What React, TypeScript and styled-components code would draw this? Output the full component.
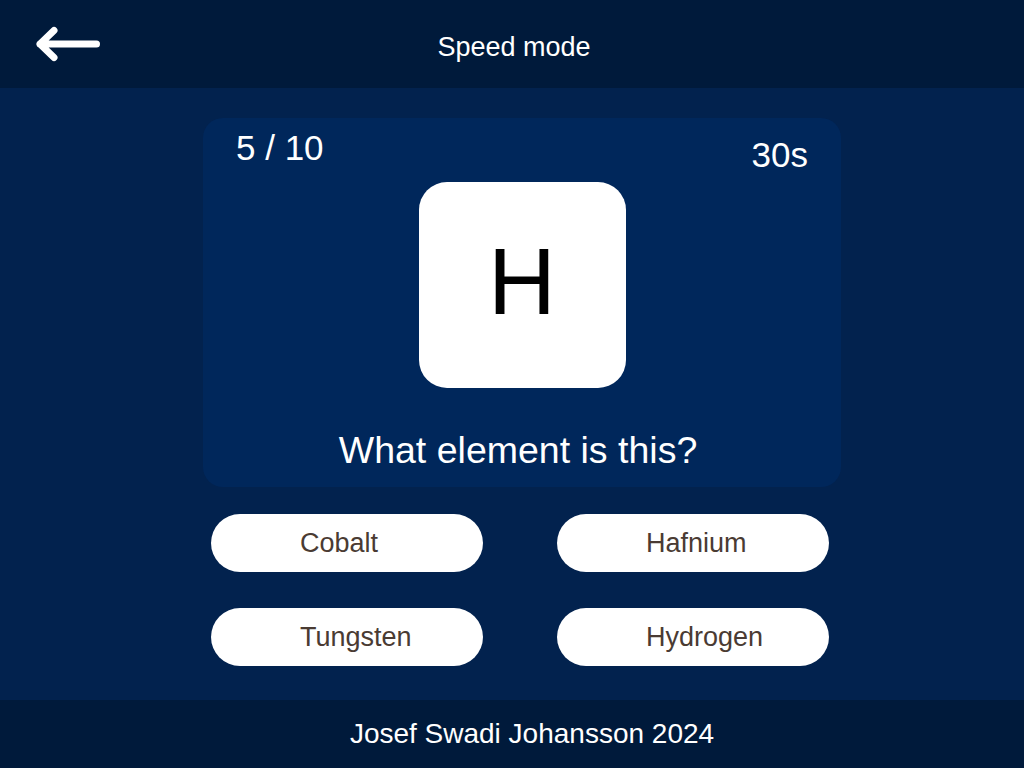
import styled, { createGlobalStyle } from "styled-components";

const GlobalStyle = createGlobalStyle`
  * {
    box-sizing: border-box;
  }

  body {
    margin: 0;
    font-family: "Liberation Sans", Arial, sans-serif;
    background-color: #02224e;
  }
`;

const Page = styled.div`
  display: flex;
  flex-direction: column;
  width: 1024px;
  height: 768px;
`;

const Header = styled.header`
  display: grid;
  grid-template-columns: 1fr auto 1fr;
  align-items: center;
  height: 88px;
  padding: 0 32px;
  background-color: #001a3b;
`;

const BackButton = styled.button`
  display: flex;
  justify-self: start;
  padding: 0;
  border: none;
  background: transparent;
  cursor: pointer;
`;

const Title = styled.h1`
  margin: 0;
  padding: 6px 0 0 4px;
  font-size: 27px;
  font-weight: 400;
  color: #ffffff;
`;

const Main = styled.main`
  display: flex;
  flex-direction: column;
  align-items: center;
  flex: 1;
  padding: 30px 0 34px 20px;
`;

const Card = styled.section`
  display: flex;
  flex-direction: column;
  align-items: center;
  width: 638px;
  height: 369px;
  padding: 10px 33px 15px;
  border-radius: 20px;
  background-color: #00275b;
  color: #ffffff;
`;

const TopRow = styled.div`
  display: flex;
  justify-content: space-between;
  align-items: flex-start;
  align-self: stretch;
  font-size: 35px;
`;

const Timer = styled.span`
  margin-top: 7px;
`;

const SymbolBox = styled.div`
  display: flex;
  justify-content: center;
  align-items: center;
  width: 207px;
  height: 206px;
  margin-top: 7px;
  padding-bottom: 7px;
  border-radius: 28px;
  background-color: #ffffff;
  color: #000000;
  font-size: 94px;
`;

const Question = styled.p`
  margin: 41px 8px 0 0;
  font-size: 37.5px;
`;

const Answers = styled.div`
  display: grid;
  grid-template-columns: 272px 272px;
  column-gap: 74px;
  row-gap: 36px;
  margin: 27px 0 0 -4px;
`;

const AnswerBtn = styled.button`
  height: 58px;
  padding: 0 0 0 89px;
  border: none;
  border-radius: 29px;
  background-color: #ffffff;
  color: #4a3b33;
  font-family: "Liberation Sans", Arial, sans-serif;
  font-size: 27px;
  text-align: left;
  cursor: pointer;
`;

const Footer = styled.footer`
  display: flex;
  justify-content: center;
  align-items: center;
  height: 68px;
  padding-left: 40px;
  background-color: #001a3b;
  color: #ffffff;
  font-size: 28px;
`;

const answers = ["Cobalt", "Hafnium", "Tungsten", "Hydrogen"];

function App() {
  return (
    <Page>
      <GlobalStyle />
      <Header>
        <BackButton aria-label="Back">
          <svg width="72" height="46" viewBox="0 0 72 46" fill="none">
            <path
              d="M64.5 23 H8 M22 9.5 L8 23 L22 36.5"
              stroke="#ffffff"
              strokeWidth="7"
              strokeLinecap="round"
              strokeLinejoin="round"
            />
          </svg>
        </BackButton>
        <Title>Speed mode</Title>
        <div />
      </Header>
      <Main>
        <Card>
          <TopRow>
            <span>5 / 10</span>
            <Timer>30s</Timer>
          </TopRow>
          <SymbolBox>H</SymbolBox>
          <Question>What element is this?</Question>
        </Card>
        <Answers>
          {answers.map((a) => (
            <AnswerBtn key={a}>{a}</AnswerBtn>
          ))}
        </Answers>
      </Main>
      <Footer>Josef Swadi Johansson 2024</Footer>
    </Page>
  );
}

export default App;
